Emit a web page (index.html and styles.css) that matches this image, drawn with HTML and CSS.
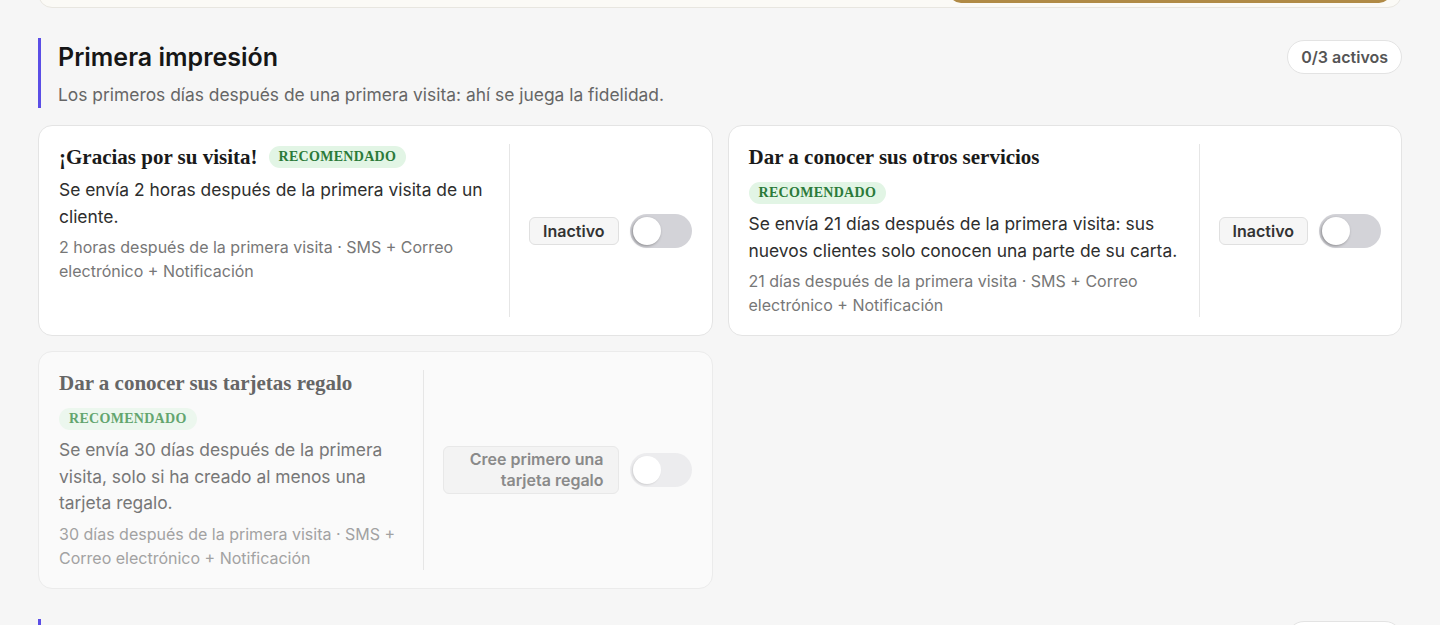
FILE: index.html
```html
<!DOCTYPE html>
<html lang="es">
    <head>
        <meta charset="UTF-8" />
        <meta name="viewport" content="width=device-width, initial-scale=1.0" />
        <title>Automatizaciones</title>
        <link rel="stylesheet" href="styles.css">
    </head>
    <body>
        <div class="page">
            <!-- tarjeta anterior, solo se ve el borde inferior -->
            <div class="top-card">
                <span class="gold-btn"></span>
            </div>

            <section class="group">
                <div class="group-head">
                    <div class="group-title">
                        <h2>Primera impresión</h2>
                        <p>Los primeros días después de una primera visita: ahí se juega la fidelidad.</p>
                    </div>
                    <span class="count">0/3 activos</span>
                </div>

                <div class="grid">
                    <div class="card">
                        <div class="card-main">
                            <div class="card-title">
                                <h3>¡Gracias por su visita!</h3>
                                <span class="badge">RECOMENDADO</span>
                            </div>
                            <p class="desc">Se envía 2 horas después de la primera visita de un cliente.</p>
                            <p class="meta">2 horas después de la primera visita · SMS + Correo electrónico + Notificación</p>
                        </div>
                        <div class="card-side">
                            <span class="state">Inactivo</span>
                            <span class="toggle"><span class="knob"></span></span>
                        </div>
                    </div>

                    <div class="card">
                        <div class="card-main">
                            <div class="card-title">
                                <h3>Dar a conocer sus otros servicios</h3>
                                <span class="badge">RECOMENDADO</span>
                            </div>
                            <p class="desc">Se envía 21 días después de la primera visita: sus nuevos clientes solo conocen una parte de su carta.</p>
                            <p class="meta">21 días después de la primera visita · SMS + Correo electrónico + Notificación</p>
                        </div>
                        <div class="card-side">
                            <span class="state">Inactivo</span>
                            <span class="toggle"><span class="knob"></span></span>
                        </div>
                    </div>

                    <div class="card disabled">
                        <div class="card-main">
                            <div class="card-title">
                                <h3>Dar a conocer sus tarjetas regalo</h3>
                                <span class="badge">RECOMENDADO</span>
                            </div>
                            <p class="desc">Se envía 30 días después de la primera visita, solo si ha creado al menos una tarjeta regalo.</p>
                            <p class="meta">30 días después de la primera visita · SMS + Correo electrónico + Notificación</p>
                        </div>
                        <div class="card-side">
                            <span class="state state-wide">Cree primero una tarjeta regalo</span>
                            <span class="toggle"><span class="knob"></span></span>
                        </div>
                    </div>
                </div>
            </section>

            <section class="group">
                <div class="group-head">
                    <div class="group-title">
                        <h2>Fidelizar a sus clientes</h2>
                        <p>Mantenga el contacto con quienes ya le conocen.</p>
                    </div>
                    <span class="count">0/4 activos</span>
                </div>
            </section>
        </div>
    </body>
</html>
```

FILE: styles.css
```css
* {
    margin: 0;
    padding: 0;
    box-sizing: border-box;
}
body {
    background-color: #f6f6f6;
    font-family: Inter, "Noto Sans", sans-serif;
    color: #1f1f1f;
}
.page {
    padding: 0 38px 40px;
}

/* tarjeta anterior */
.top-card {
    margin-top: -62px;
    height: 70px;
    background-color: #fbfaf6;
    border: 1px solid #e8e6e0;
    border-radius: 14px;
    display: flex;
    justify-content: flex-end;
    align-items: flex-end;
    padding: 0 10px 4px;
}
.gold-btn {
    width: 442px;
    height: 50px;
    border-radius: 12px;
    background-color: #b08a45;
}

/* cabecera del grupo */
.group {
    margin-top: 30px;
}
.group-head {
    display: flex;
    justify-content: space-between;
    align-items: flex-start;
}
.group-title {
    border-left: 3px solid #5b4ee6;
    padding-left: 17px;
}
.group-title h2 {
    font-size: 25px;
    line-height: 38px;
    font-weight: 600;
    color: #161616;
}
.group-title p {
    margin-top: 6px;
    font-size: 17.4px;
    line-height: 26px;
    color: #666;
}
.count {
    margin-top: 2px;
    height: 34px;
    line-height: 32px;
    padding: 0 13px;
    background-color: #fff;
    border: 1px solid #e3e3e3;
    border-radius: 17px;
    font-size: 16px;
    font-weight: 600;
    color: #555;
}

/* tarjetas */
.grid {
    margin-top: 17px;
    display: grid;
    grid-template-columns: 1fr 1fr;
    gap: 15px;
}
.card {
    display: flex;
    background-color: #fff;
    border: 1px solid #e4e4e4;
    border-radius: 14px;
    padding: 18px 20px;
}
.card-main {
    flex: 1;
    padding-right: 20px;
}
.card-title {
    display: flex;
    flex-wrap: wrap;
    align-items: center;
    column-gap: 11px;
    row-gap: 12px;
}
.card-title h3 {
    font-family: "Liberation Serif", "DejaVu Serif", serif;
    font-size: 21px;
    line-height: 26px;
    font-weight: 700;
    color: #1a1a1a;
}
.badge {
    height: 22px;
    line-height: 22px;
    padding: 0 10px;
    border-radius: 11px;
    background-color: #e2f5e5;
    color: #2b7a39;
    font-family: "Liberation Serif", "DejaVu Serif", serif;
    font-size: 14px;
    font-weight: 700;
    letter-spacing: 0.3px;
}
.desc {
    margin-top: 7px;
    font-size: 17.4px;
    line-height: 26.5px;
    color: #2e2e2e;
}
.meta {
    margin-top: 5px;
    font-size: 16px;
    line-height: 24px;
    color: #777;
}
.card-side {
    display: flex;
    align-items: center;
    gap: 11px;
    border-left: 1px solid #e6e6e6;
    padding-left: 19px;
}
.state {
    height: 28px;
    line-height: 26px;
    padding: 0 13px;
    background-color: #f6f6f6;
    border: 1px solid #e0e0e0;
    border-radius: 6px;
    font-size: 16px;
    font-weight: 600;
    color: #333;
}
.state-wide {
    max-width: 176px;
    height: auto;
    line-height: 21px;
    padding: 2px 14px 2px 12px;
    text-align: right;
}
.toggle {
    width: 62px;
    height: 34px;
    padding: 3px;
    border-radius: 17px;
    background-color: #d3d3d8;
    display: flex;
}
.knob {
    width: 28px;
    height: 28px;
    border-radius: 50%;
    background-color: #fff;
    box-shadow: -1px 1px 3px rgba(0, 0, 0, 0.35);
}

/* tarjeta deshabilitada */
.card.disabled {
    background-color: #fafafa;
    border-color: #ebebeb;
}
.disabled .card-title h3 {
    color: #666;
}
.disabled .badge {
    background-color: #ecf7ee;
    color: #63a56e;
}
.disabled .desc {
    color: #777;
}
.disabled .meta {
    color: #a2a2a2;
}
.disabled .state {
    background-color: #f3f3f3;
    border-color: #e8e8e8;
    color: #8a8a8a;
}
.disabled .toggle {
    background-color: #ececee;
}
.disabled .knob {
    box-shadow: -1px 1px 2px rgba(0, 0, 0, 0.12);
}
```
